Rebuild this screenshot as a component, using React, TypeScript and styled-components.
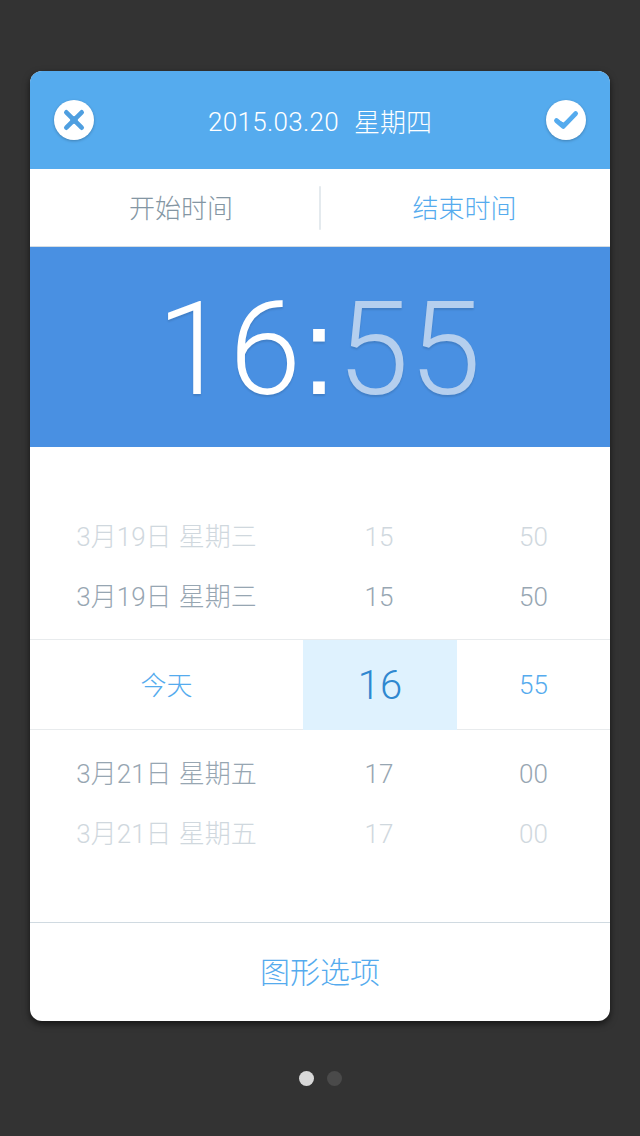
import React from "react";
import styled, { createGlobalStyle } from "styled-components";

const Global = createGlobalStyle`
  * { box-sizing: border-box; }
  body {
    margin: 0;
    background: #333333;
    font-family: Roboto, "Noto Sans CJK SC", sans-serif;
    font-weight: 300;
    word-spacing: 0.8px;
  }
`;

const Screen = styled.main`
  width: 640px;
  height: 1136px;
  padding-top: 71px;
  display: flex;
  flex-direction: column;
  align-items: center;
`;

const Card = styled.section`
  width: 580px;
  height: 950px;
  display: flex;
  flex-direction: column;
  overflow: hidden;
  border-radius: 12px;
  background: #ffffff;
  box-shadow: 0 3px 7px rgba(0, 0, 0, 0.6);
`;

const Header = styled.header`
  height: 98px;
  padding: 0 24px;
  display: flex;
  align-items: center;
  justify-content: space-between;
  background: #55abee;
`;

const Title = styled.h1`
  margin: 5px 0 0;
  display: flex;
  gap: 15px;
  font-size: 26px;
  line-height: 36px;
  font-weight: 300;
  color: #ffffff;
`;

const DateText = styled.span`
  margin-top: -1px;
  letter-spacing: 0.3px;
`;

const RoundButton = styled.button`
  width: 40px;
  height: 40px;
  padding: 0;
  border: 0;
  border-radius: 50%;
  background: #ffffff;
  box-shadow: 0 1px 3px rgba(0, 0, 0, 0.25);

  svg { display: block; }
`;

const Tabs = styled.nav`
  height: 78px;
  display: grid;
  grid-template-columns: 289px 2px 289px;
  align-items: center;
  border-bottom: 1px solid #d5dde3;
`;

const Tab = styled.div<{ $active?: boolean }>`
  padding: ${(p) => (p.$active ? "2px 2px 0 0" : "2px 0 0 13px")};
  text-align: center;
  font-size: 26px;
  line-height: 36px;
  color: ${(p) => (p.$active ? "#55abee" : "#8496a3")};
`;

const Divider = styled.div`
  height: 44px;
  border-radius: 1px;
  background: #e4eaee;
`;

const Clock = styled.div`
  height: 200px;
  padding: 3px 2px 0 0;
  display: flex;
  align-items: baseline;
  justify-content: center;
  background: #4990e2;
  font-size: 130px;
  line-height: 200px;
  color: #ffffff;
  text-shadow: 0 2px 2px rgba(0, 0, 0, 0.12);
`;

const Colon = styled.span`
  width: 36px;
  text-align: center;
  font-family: "Liberation Sans", sans-serif;
  font-size: 122px;
  font-weight: 400;
`;

const Minutes = styled.span`
  color: #b5cfee;
`;

const Picker = styled.div`
  flex: 1;
  display: flex;
  flex-direction: column;
`;

const Group = styled.div<{ $top: number; $height: number }>`
  height: ${(p) => p.$height}px;
  padding-top: ${(p) => p.$top}px;
`;

const Row = styled.div<{ $faded?: boolean }>`
  height: 60px;
  display: grid;
  grid-template-columns: 273px 154px 153px;
  align-items: center;
  text-align: center;
  font-size: 26px;
  line-height: 36px;
  color: ${(p) => (p.$faded ? "#d0d8de" : "#97a6b2")};
`;

const Hour = styled.span`
  padding-right: 2px;
`;

const SelectedRow = styled(Row)`
  height: 91px;
  border-top: 1px solid #e8ebed;
  border-bottom: 1px solid #e8ebed;
  color: #55abee;
`;

const Today = styled.span`
  padding-top: 2px;
`;

const Highlight = styled.div`
  height: 90px;
  padding-top: 1px;
  align-self: start;
  background: #dff2fe;
  font-size: 40px;
  line-height: 90px;
  color: #2f88d0;
`;

const Footer = styled.footer`
  height: 99px;
  padding-top: 2px;
  display: flex;
  align-items: center;
  justify-content: center;
  border-top: 1px solid #d0dae1;
  font-size: 30px;
  line-height: 40px;
  color: #55abee;
`;

const Pager = styled.div`
  margin-top: 50px;
  display: flex;
  gap: 13px;
`;

const Dot = styled.span<{ $active?: boolean }>`
  width: 15px;
  height: 15px;
  border-radius: 50%;
  background: ${(p) => (p.$active ? "#d8d8d8" : "#4a4a4a")};
`;

const before = [
  { date: "3月19日 星期三", hour: "15", minute: "50", faded: true },
  { date: "3月19日 星期三", hour: "15", minute: "50", faded: false },
];
const after = [
  { date: "3月21日 星期五", hour: "17", minute: "00", faded: false },
  { date: "3月21日 星期五", hour: "17", minute: "00", faded: true },
];

function Rows({ items }: { items: typeof before }) {
  return (
    <>
      {items.map((r, i) => (
        <Row key={i} $faded={r.faded}>
          <span>{r.date}</span>
          <Hour>{r.hour}</Hour>
          <span>{r.minute}</span>
        </Row>
      ))}
    </>
  );
}

export default function App() {
  return (
    <Screen>
      <Global />
      <Card>
        <Header>
          <RoundButton aria-label="取消">
            <svg width="40" height="40" viewBox="0 0 40 40" fill="none" stroke="#4f9fe0" strokeWidth="4.6" strokeLinecap="round">
              <path d="M12.3 12.3L27.7 27.7M27.7 12.3L12.3 27.7" />
              <path d="M20 17.2L22.8 20L20 22.8L17.2 20Z" strokeWidth="2" fill="#4f9fe0" />
            </svg>
          </RoundButton>
          <Title>
            <DateText>2015.03.20</DateText>
            <span>星期四</span>
          </Title>
          <RoundButton aria-label="确定">
            <svg width="40" height="40" viewBox="0 0 40 40" fill="none" stroke="#55abee" strokeWidth="4.8" strokeLinecap="round" strokeLinejoin="round">
              <path d="M10.5 20.6L17.3 26.4L29.6 13.6" />
              <path d="M13.5 21L17.3 23L21 21L17.3 26Z" strokeWidth="1" fill="#55abee" />
            </svg>
          </RoundButton>
        </Header>
        <Tabs>
          <Tab>开始时间</Tab>
          <Divider />
          <Tab $active>结束时间</Tab>
        </Tabs>
        <Clock>
          <span>16</span>
          <Colon>:</Colon>
          <Minutes>55</Minutes>
        </Clock>
        <Picker>
          <Group $top={60} $height={192}>
            <Rows items={before} />
          </Group>
          <SelectedRow>
            <Today>今天</Today>
            <Highlight>16</Highlight>
            <span>55</span>
          </SelectedRow>
          <Group $top={14} $height={192}>
            <Rows items={after} />
          </Group>
        </Picker>
        <Footer>图形选项</Footer>
      </Card>
      <Pager>
        <Dot $active />
        <Dot />
      </Pager>
    </Screen>
  );
}
